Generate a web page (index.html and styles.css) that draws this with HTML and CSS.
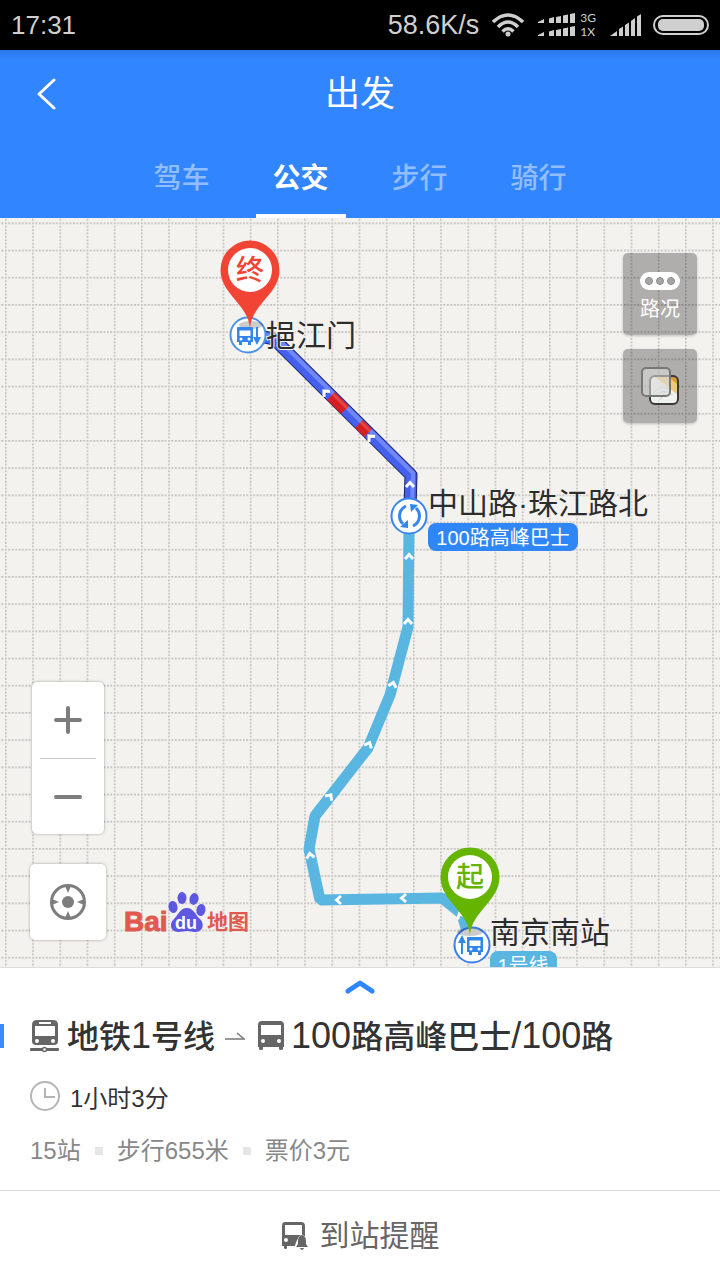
FILE: index.html
```html
<!DOCTYPE html>
<html lang="zh-CN">

<head>
    <meta charset="UTF-8">
    <meta name="viewport" content="width=device-width, initial-scale=1.0">
    <title>出发</title>
    <link rel="stylesheet" href="styles.css">
</head>

<body>

    <!-- Phone status bar -->
    <div class="status-bar">
        <span class="clock">17:31</span>
        <span class="speed">58.6K/s</span>
        <svg class="wifi" width="32" height="24" viewBox="0 0 32 24" fill="none" stroke="#cfcfcf" stroke-width="3.500">
            <path d="M1 9 Q16 -5 31 9"/>
            <path d="M6 14 Q16 4 26 14"/>
            <path d="M10.500 18.500 Q16 13 21.500 18.500"/>
            <circle cx="16" cy="21" r="2.500" fill="#cfcfcf" stroke="none"/>
        </svg>
        <svg class="dual-signal" width="38" height="24" viewBox="0 0 38 24" fill="#cfcfcf">
            <path d="M0 10V9L6 6V10ZM11 10V5.500L16 4V10ZM18 10V4L23 3V10ZM25 10V2.500L30 1.500V10ZM32 10V1L37 0V10Z"/>
            <path d="M0 23V22L6 19V23ZM11 23V18.500L16 17V23ZM18 23V17L23 16V23ZM25 23V15.500L30 14.500V23ZM32 23V14L37 13V23Z"/>
        </svg>
        <span class="net"><span>3G</span><span>1X</span></span>
        <svg class="signal" width="32" height="24" viewBox="0 0 32 24" fill="#cfcfcf">
            <path d="M0 23L7 18V23ZM9 23V16L13 13.500V23ZM15 23V12L19 9.500V23ZM21 23V8L25 5V23ZM27 23V3.500L31 1V23Z"/>
        </svg>
        <svg class="battery" width="56" height="20" viewBox="0 0 56 20">
            <rect x="1" y="1" width="54" height="18" rx="9" fill="none" stroke="#cfcfcf" stroke-width="2"/>
            <rect x="5" y="4" width="46" height="12" rx="5" fill="#cfcfcf"/>
        </svg>
    </div>

    <!-- Title and travel modes -->
    <header class="header">
        <div class="title-row">
            <button class="back" aria-label="返回">
                <svg width="20" height="34" viewBox="0 0 20 34" fill="none" stroke="#fff" stroke-width="3" stroke-linecap="round" stroke-linejoin="round">
                    <path d="M17 3L2 17L17 31"/>
                </svg>
            </button>
            <h1>出发</h1>
        </div>
        <nav class="tabs">
            <a href="#car">驾车</a>
            <a href="#bus" class="active">公交</a>
            <a href="#walk">步行</a>
            <a href="#ride">骑行</a>
        </nav>
    </header>

    <main class="map">
        <svg class="grid" width="100%" height="100%">
            <defs>
                <pattern id="cells" x="5" y="4.400" width="27.200" height="27.200" patternUnits="userSpaceOnUse">
                    <path d="M0 .8H27.200M.8 0V27.200" stroke="#bcb9b7" stroke-width="1.600" stroke-dasharray="1.700 1.700"/>
                </pattern>
            </defs>
            <rect width="100%" height="100%" fill="url(#cells)"/>
        </svg>

        <!-- Route, stops and pins -->
        <svg class="route" viewBox="0 0 720 749" preserveAspectRatio="xMidYMin slice">
            <defs>
                <path id="arrow" d="M-4 3L0 -1.500L4 3" fill="none" stroke="#fff" stroke-width="3"/>
                <path id="pin" d="M0 58C-2 34 -29.500 24 -29.500 0A29.500 29.500 0 0 1 29.500 0C29.500 24 2 34 0 58Z"/>
                <g id="bus">
                    <path fill-rule="evenodd" d="M-7 -9H7Q8 -9 8 -8V6H-8V-8Q-8 -9 -7 -9ZM-5.500 -5.500V0H5.500V-5.500Z"/>
                    <path d="M-6 5H-3V9H-6ZM3 5H6V9H3Z"/>
                    <circle cx="-4" cy="3" r="1.500" fill="#fff"/>
                    <circle cx="4" cy="3" r="1.500" fill="#fff"/>
                </g>
            </defs>

            <!-- Metro line 1 -->
            <path d="M468 717L462 696L442 680L320 682L309 631L315 598L368 530L390 477L408 409L409 310" fill="none" stroke="#58b6e1" stroke-width="11" stroke-linejoin="bevel"/>

            <!-- Bus 100 -->
            <path d="M255 117L274 121L411 257L410 290" fill="none" stroke="#172064" stroke-width="13" stroke-linejoin="round"/>
            <path d="M255 117L274 121L411 257L410 290" fill="none" stroke="#4660ee" stroke-width="11" stroke-linejoin="round"/>
            <path d="M255 115L276 119L413 255L412 290" fill="none" stroke="#7088f6" stroke-width="4" stroke-linejoin="round"/>
            <path d="M331 178L345 192M359 206L368 215" stroke="#d51f22" stroke-width="11"/>
            <path d="M333 176L347 190M361 204L370 213" stroke="#e44542" stroke-width="3"/>

            <use href="#arrow" transform="translate(325 174) rotate(-42)"/>
            <use href="#arrow" transform="translate(370 219) rotate(-42)"/>
            <use href="#arrow" transform="translate(410 266)"/>
            <use href="#arrow" transform="translate(409 338)"/>
            <use href="#arrow" transform="translate(408 403)"/>
            <use href="#arrow" transform="translate(393 466) rotate(15)"/>
            <use href="#arrow" transform="translate(369 526) rotate(25)"/>
            <use href="#arrow" transform="translate(330 578) rotate(35)"/>
            <use href="#arrow" transform="translate(310 637) rotate(-10)"/>
            <use href="#arrow" transform="translate(338 682) rotate(-90)"/>
            <use href="#arrow" transform="translate(403 680) rotate(-90)"/>
            <use href="#arrow" transform="translate(460 697) rotate(-25)"/>

            <!-- Stop markers -->
            <g fill="#3186ea">
                <circle cx="248" cy="117" r="17.500" fill="#fff" stroke="#4b92e3" stroke-width="2"/>
                <ellipse cx="251" cy="107" rx="12" ry="4" fill="#000" opacity=".2"/>
                <use href="#bus" x="245" y="118"/>
                <path d="M256 109H258V119H261L257 127L253 119H256Z"/>

                <circle cx="472" cy="727" r="17.500" fill="#fff" stroke="#3880ee" stroke-width="2"/>
                <ellipse cx="470" cy="714" rx="13" ry="4" fill="#000" opacity=".2"/>
                <use href="#bus" x="475" y="728"/>
                <path d="M461 736V725H458L462 717L466 725H463V736Z"/>

                <circle cx="409" cy="298" r="17.500" fill="#fff" stroke="#3b84ee" stroke-width="2"/>
                <path d="M406 288A11 11 0 0 0 403 306M413 308A11 11 0 0 0 416 290" fill="none" stroke="#3b84ee" stroke-width="3"/>
                <path d="M400 309L408 310V302ZM410 286L418 287L411 294Z"/>
            </g>

            <!-- Stop names -->
            <g class="stop-names">
                <text x="266" y="128">挹江门</text>
                <text x="428" y="296">中山路·珠江路北</text>
                <text x="490" y="725">南京南站</text>
            </g>
            <rect x="428" y="305" width="150" height="28" rx="8" fill="#2f86f6"/>
            <text class="line-name" x="503" y="327">100路高峰巴士</text>
            <rect x="490" y="733" width="67" height="28" rx="8" fill="#58b6e1"/>
            <text class="line-name" x="523" y="755">1号线</text>

            <!-- End and start pins -->
            <use href="#pin" x="250" y="52" fill="#f24435"/>
            <circle cx="250" cy="52" r="22" fill="#fff"/>
            <text class="pin-name end" x="250" y="62">终</text>
            <use href="#pin" x="470" y="659" fill="#64b400"/>
            <circle cx="470" cy="659" r="22" fill="#fff"/>
            <text class="pin-name start" x="470" y="669">起</text>
        </svg>

        <div class="map-tools">
            <button class="tool traffic">
                <svg width="40" height="18" viewBox="0 0 40 18">
                    <rect width="40" height="18" rx="9" fill="#fff"/>
                    <g fill="#a5a5a4" stroke="#8c8c8b">
                        <circle cx="9" cy="9" r="3.500"/>
                        <circle cx="20" cy="9" r="3.500"/>
                        <circle cx="31" cy="9" r="3.500"/>
                    </g>
                </svg>
                路况
            </button>
            <button class="tool" aria-label="图层">
                <svg width="40" height="40" viewBox="0 0 40 40">
                    <rect x="10" y="10" width="28" height="28" rx="5" fill="#eff3f0"/>
                    <path d="M14 10H33Q38 10 38 15V29Z" fill="#edc77b"/>
                    <path d="M28 10H33Q38 10 38 15V19Z" fill="#d89a35"/>
                    <path d="M13 27Q20 18 29 23M14 31Q22 21 33 29M18 36L25 27" fill="none" stroke="#cbd5cf"/>
                    <rect x="10" y="10" width="28" height="28" rx="5" fill="none" stroke="#393837" stroke-width="2"/>
                    <rect x="2" y="2" width="28" height="28" rx="4" fill="#d8dad8" fill-opacity=".6" stroke="#777" stroke-width="2"/>
                </svg>
            </button>
        </div>

        <div class="map-controls">
            <div class="zoom">
                <button aria-label="放大">
                    <svg width="28" height="28" viewBox="0 0 28 28" stroke="#7d7d7d" stroke-width="4" stroke-linecap="round"><path d="M2 14H26M14 2V26"/></svg>
                </button>
                <button aria-label="缩小">
                    <svg width="28" height="28" viewBox="0 0 28 28" stroke="#7d7d7d" stroke-width="4" stroke-linecap="round"><path d="M2 14H26"/></svg>
                </button>
            </div>
            <button class="locate" aria-label="定位">
                <svg width="36" height="36" viewBox="0 0 36 36" fill="#7d7d7d">
                    <circle cx="18" cy="18" r="16.500" fill="none" stroke="#7d7d7d" stroke-width="3"/>
                    <circle cx="18" cy="18" r="6"/>
                    <path d="M15.500 3H20.500L18 9ZM15.500 33H20.500L18 27ZM3 15.500V20.500L9 18ZM33 15.500V20.500L27 18Z"/>
                </svg>
            </button>
        </div>

        <!-- Map provider logo -->
        <svg class="logo" width="128" height="44" viewBox="0 0 128 44">
            <g class="logo-text" fill="#e05a50">
                <text x="0" y="39" font-size="28" stroke="#e05a50">Bai</text>
                <text x="83" y="37" font-size="21">地图</text>
            </g>
            <g fill="#5d58df">
                <ellipse cx="49" cy="15" rx="4.500" ry="6" transform="rotate(-10 49 15)"/>
                <ellipse cx="58" cy="6" rx="4.500" ry="6"/>
                <ellipse cx="70" cy="7" rx="4.500" ry="6" transform="rotate(12 70 7)"/>
                <ellipse cx="77" cy="18" rx="4.500" ry="6" transform="rotate(10 77 18)"/>
                <path d="M63 16C70 16 71 23 76 27C81 32 79 40 71 40C67 40 66 39 63 39C60 39 58 40 54 40C46 40 45 31 50 27C55 22 56 16 63 16Z"/>
            </g>
            <text class="logo-text" x="62" y="37" font-size="18" fill="#fff" text-anchor="middle">du</text>
        </svg>
    </main>

    <!-- Route summary -->
    <section class="panel">
        <button class="expand" aria-label="展开">
            <svg width="30" height="16" viewBox="0 0 30 16" fill="none" stroke="#2f86ff" stroke-width="5" stroke-linecap="round" stroke-linejoin="round">
                <path d="M3 12L15 4L27 12"/>
            </svg>
        </button>

        <h2 class="lines">
            <svg class="metro" width="30" height="34" viewBox="0 0 30 34" fill="#666">
                <path fill-rule="evenodd" d="M7 1H23Q28 1 28 6V22Q28 26 24 26H6Q2 26 2 22V6Q2 1 7 1ZM5 7V17H25V7ZM9 3V5H21V3Z"/>
                <circle cx="7" cy="22" r="2" fill="#fff"/>
                <circle cx="23" cy="22" r="2" fill="#fff"/>
                <rect y="29" width="29" height="3" rx="1"/>
                <circle cx="14.500" cy="30.500" r="2" fill="#fff" stroke="#666" stroke-width="1.500"/>
            </svg>
            <span>地铁<span class="num">1</span>号线</span>
            <svg class="then" width="20" height="10" viewBox="0 0 20 10" fill="none" stroke="#777" stroke-width="1.500">
                <path d="M0 8H19L12 2"/>
            </svg>
            <svg class="bus" width="26" height="30" viewBox="0 0 26 30" fill="#666">
                <path fill-rule="evenodd" d="M4 0H22Q26 0 26 4V26H25V28Q25 29 23 29Q21 29 21 28V26H5V28Q5 29 3 29Q1 29 1 28V26H0V4Q0 0 4 0ZM3 4V14H23V4Z"/>
                <circle cx="5" cy="20" r="2" fill="#fff"/>
                <circle cx="21" cy="20" r="2" fill="#fff"/>
            </svg>
            <span><span class="num">100</span>路高峰巴士<span class="num">/100</span>路</span>
        </h2>

        <p class="duration">
            <svg width="30" height="30" viewBox="0 0 30 30" fill="none" stroke="#b5b5b5" stroke-width="2">
                <circle cx="15" cy="15" r="14"/>
                <path d="M15 7V16H25"/>
            </svg>
            1小时3分
        </p>

        <ul class="details">
            <li>15站</li>
            <li>步行655米</li>
            <li>票价3元</li>
        </ul>
    </section>

    <button class="remind">
        <svg width="28" height="30" viewBox="0 0 28 30" fill="#666">
            <path fill-rule="evenodd" d="M4 1H20Q24 1 24 5V16L20 14Q15 19 14 25H6V27Q6 28 4.500 28Q3 28 3 27V25H1V5Q1 1 4 1ZM4 4V14H21V4Z"/>
            <circle cx="5" cy="19" r="2" fill="#fff"/>
            <path d="M21 14Q25 15 25 20V23L27 26H15L17 23V20Q17 15 21 14ZM19 27H23Q22 29 21 29Q20 29 19 27Z" stroke="#fff" stroke-width="1" paint-order="stroke"/>
        </svg>
        到站提醒
    </button>

</body>

</html>
```
FILE: styles.css
```css
* {
    box-sizing: border-box;
}

body {
    display: flex;
    flex-direction: column;
    min-height: 100vh;
    margin: 0;
    background-color: #fff;
    font-family: "Liberation Sans", "Noto Sans CJK SC", sans-serif;
}

h1, h2, p, ul {
    margin: 0;
    padding: 0;
    font-weight: normal;
}

button {
    padding: 0;
    border: none;
    background: none;
    color: inherit;
    font-family: inherit;
}

svg {
    display: block;
    flex-shrink: 0;
}

/* Status bar */
.status-bar {
    display: flex;
    align-items: center;
    height: 50px;
    padding: 0 11px;
    background-color: #000;
    color: #cfcfcf;
    font-size: 27px;
    line-height: 54px;
}

.clock {
    margin-right: auto;
    font-size: 26px;
}

.wifi {
    margin: 0 14px 0 13px;
}

.net {
    display: flex;
    flex-direction: column;
    margin: 0 14px 0 4px;
    font-family: Lato, sans-serif;
    font-size: 12px;
    line-height: 14px;
}

.battery {
    margin-left: 11px;
}

/* Header */
.header {
    background-color: #3185ff;
    background-image: linear-gradient(#2b78e8, #3185ff 10px);
    color: #fff;
}

.title-row {
    display: grid;
    grid-template-columns: 60px 1fr 60px;
    align-items: center;
    height: 88px;
}

.back {
    display: flex;
    justify-content: flex-end;
    padding-right: 3px;
}

.title-row h1 {
    font-size: 35px;
    line-height: 48px;
    text-align: center;
}

.tabs {
    display: flex;
    justify-content: center;
    gap: 29px;
    height: 80px;
}

.tabs a {
    width: 90px;
    color: #92beff;
    font-size: 28px;
    font-weight: 500;
    line-height: 82px;
    text-align: center;
    text-decoration: none;
}

.tabs .active {
    border-bottom: 4px solid #fff;
    color: #fff;
    font-weight: bold;
}

/* Map */
.map {
    position: relative;
    flex: 1;
    min-height: 480px;
    overflow: hidden;
    background-color: #f4f2ef;
}

.grid,
.route {
    position: absolute;
    top: 0;
    left: 0;
    width: 100%;
    height: 100%;
}

.stop-names text {
    font-size: 30px;
    fill: #2c2c2c;
    stroke: #f4f2ef;
    stroke-width: 2px;
    paint-order: stroke;
}

.line-name {
    font-size: 20px;
    fill: #fff;
    text-anchor: middle;
}

.pin-name {
    font-size: 28px;
    font-weight: 500;
    text-anchor: middle;
}

.end {
    fill: #f24435;
}

.start {
    fill: #64b400;
}

.map-tools {
    position: absolute;
    top: 35px;
    right: 23px;
    display: flex;
    flex-direction: column;
    gap: 14px;
}

.tool {
    display: flex;
    flex-direction: column;
    align-items: center;
    justify-content: center;
    width: 74px;
    height: 74px;
    border-radius: 5px;
    background-color: rgba(0, 0, 0, 0.28);
    box-shadow: 0 1px 3px rgba(0, 0, 0, 0.2);
    color: #fff;
    font-size: 20px;
    line-height: 28px;
}

.traffic {
    gap: 5px;
    height: 82px;
    padding-top: 6px;
}

.map-controls {
    position: absolute;
    bottom: 27px;
    left: 30px;
    display: flex;
    flex-direction: column;
    align-items: center;
    gap: 30px;
}

.zoom,
.locate {
    border-radius: 5px;
    background-color: #fff;
    box-shadow: 0 0 3px rgba(0, 0, 0, 0.35);
}

.zoom {
    padding: 0 8px;
}

.zoom button,
.locate {
    display: flex;
    align-items: center;
    justify-content: center;
    width: 76px;
    height: 76px;
}

.zoom button {
    width: 56px;
}

.zoom button + button {
    border-top: 1px solid #c8c8c8;
}

.logo {
    position: absolute;
    bottom: 31px;
    left: 124px;
}

.logo-text {
    font-weight: bold;
}

/* Route summary */
.panel {
    padding: 0 30px 14px;
    border-top: 1px solid #ddd;
}

.expand {
    display: block;
    margin: 0 auto;
    padding: 11px 20px;
}

.lines {
    display: flex;
    align-items: center;
    height: 60px;
    margin-left: -30px;
    color: #333;
    font-size: 32px;
    font-weight: 500;
    line-height: 48px;
    white-space: nowrap;
}

.lines::before {
    content: "";
    width: 4px;
    height: 24px;
    margin-right: 26px;
    background-color: #3a8bff;
}

.num {
    font-size: 36px;
}

.metro,
.bus {
    margin-right: 7px;
}

.then {
    margin: 0 13px 0 10px;
}

.duration {
    display: flex;
    align-items: center;
    gap: 10px;
    height: 60px;
    color: #333;
    font-size: 24px;
}

.details {
    display: flex;
    color: #888;
    font-size: 24px;
    line-height: 50px;
    list-style: none;
}

.details li {
    display: flex;
    align-items: center;
}

.details li + li::before {
    content: "";
    width: 8px;
    height: 8px;
    margin: 0 14px;
    background-color: #e6e6e6;
}

.remind {
    display: flex;
    align-items: center;
    justify-content: center;
    gap: 11px;
    height: 90px;
    border-top: 1px solid #d8d8d8;
    color: #666;
    font-size: 30px;
    line-height: 44px;
}
```
